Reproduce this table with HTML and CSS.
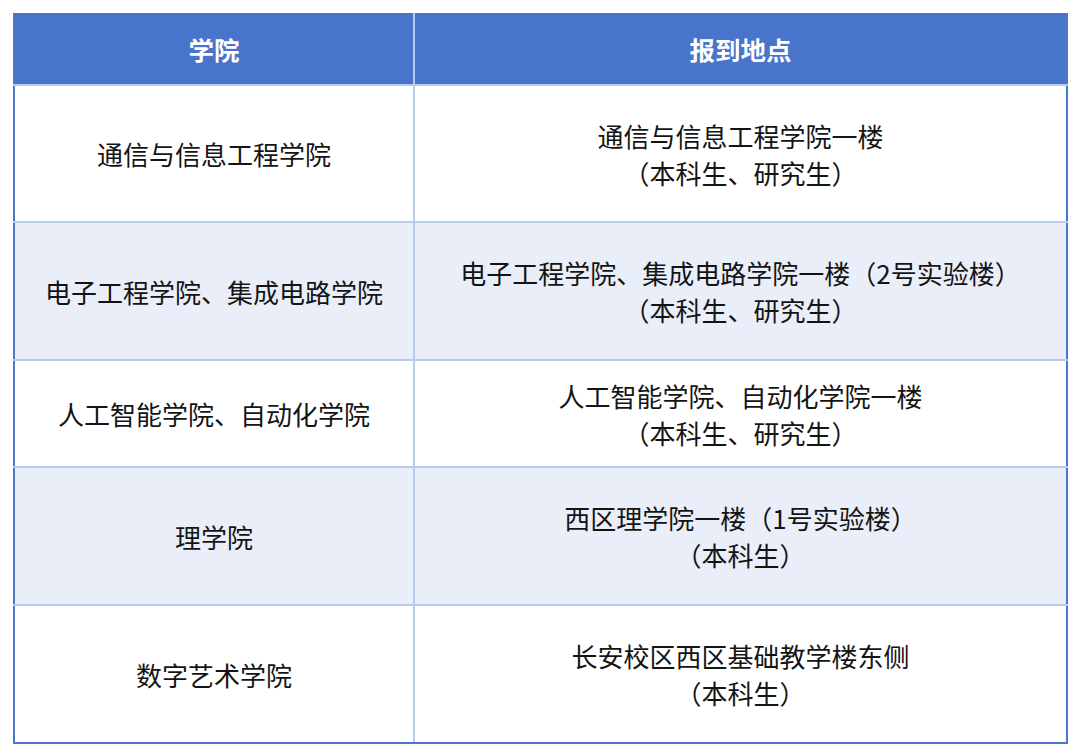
FILE: index.html
```html
<!DOCTYPE html>
<html lang="zh-CN">
<head>
<meta charset="utf-8">
<link rel="stylesheet" href="styles.css">
</head>
<body>
<table class="report">
  <colgroup>
    <col class="col-college">
    <col class="col-place">
  </colgroup>
  <thead>
    <tr class="head-row">
      <th>学院</th>
      <th>报到地点</th>
    </tr>
  </thead>
  <tbody>
    <tr class="row first">
      <td>通信与信息工程学院</td>
      <td>通信与信息工程学院一楼<br>（本科生、研究生）</td>
    </tr>
    <tr class="row tall alt">
      <td>电子工程学院、集成电路学院</td>
      <td>电子工程学院、集成电路学院一楼（2号实验楼）<br>（本科生、研究生）</td>
    </tr>
    <tr class="row short">
      <td>人工智能学院、自动化学院</td>
      <td>人工智能学院、自动化学院一楼<br>（本科生、研究生）</td>
    </tr>
    <tr class="row tall alt">
      <td>理学院</td>
      <td>西区理学院一楼（1号实验楼）<br>（本科生）</td>
    </tr>
    <tr class="row tall">
      <td>数字艺术学院</td>
      <td>长安校区西区基础教学楼东侧<br>（本科生）</td>
    </tr>
  </tbody>
</table>
</body>
</html>
```

FILE: styles.css
```css
html, body {
  margin: 0;
  padding: 0;
  background: #ffffff;
}
body {
  padding: 13px 0 0 13px;
  font-family: "Noto Sans CJK SC", "Noto Sans", sans-serif;
}
.report {
  border-collapse: collapse;
  width: 1053px;
  table-layout: fixed;
  border: 2px solid #4a76cc;
  border-top: none;
}
.col-college { width: 400px; }
.col-place { width: 653px; }
.head-row th {
  height: 71px;
  padding: 0;
  background: #4874cb;
  color: #ffffff;
  font-size: 25.5px;
  font-weight: 700;
  text-align: center;
  vertical-align: middle;
  border-left: 2px solid #b9caf0;
  border-bottom: 2px solid #b9caf0;
}
.head-row th:first-child {
  border-left: 2px solid #4a76cc;
}
.row td {
  padding: 0;
  text-align: center;
  vertical-align: middle;
  font-size: 26px;
  line-height: 37px;
  color: #141414;
  border-left: 2px solid #b9caf0;
  border-bottom: 2px solid #b9caf0;
}
.row td:first-child {
  border-left: 2px solid #4a76cc;
}
.row:last-child td {
  border-bottom: 2px solid #4a76cc;
}
.row.first td { height: 135px; }
.row.tall td { height: 136px; }
.row.short td { height: 105px; }
.row.alt td { background: #e9eef8; }
```
